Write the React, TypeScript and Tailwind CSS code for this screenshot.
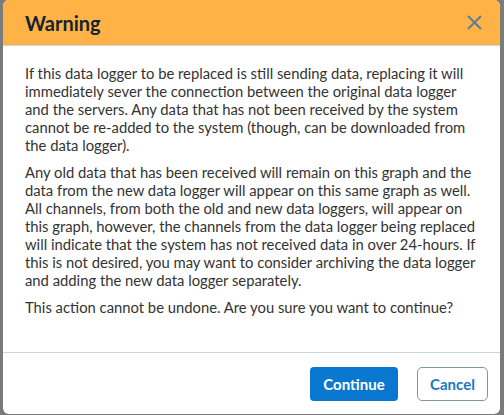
import React from 'react';

const App: React.FC = () => {
    return (
        <div className="w-[504px] h-[415px] bg-[#7b7b7b] overflow-hidden" style={{ fontFamily: 'Lato, "Open Sans", sans-serif' }}>
            <div className="ml-[3px] w-[497px] h-[414px] bg-white rounded-md flex flex-col overflow-hidden">
                {/* header */}
                <div className="h-[46px] bg-[#ffb347] border-b border-[#c9d6dc] flex items-center justify-between pl-[22px] pr-[18px] shrink-0">
                    <h2 className="text-[20px] font-bold text-[#17232e] leading-none">Warning</h2>
                    <button className="text-[#5b7d96]" aria-label="Close">
                        <svg width="15" height="15" viewBox="0 0 15 15" fill="none" stroke="currentColor" strokeWidth="2">
                            <path d="M1 1 L14 14 M14 1 L1 14" />
                        </svg>
                    </button>
                </div>

                {/* body */}
                <div className="flex-1 pl-[22px] pr-[20px] pt-[18px] text-[14.8px] leading-[18px] text-[#333]">
                    <p className="mb-[9px]">
                        If this data logger to be replaced is still sending data, replacing it will immediately sever the connection between the original data logger and the servers. Any data that has not been received by the system cannot be re-added to the system (though, can be downloaded from the data logger).
                    </p>
                    <p className="mb-[9px]">
                        Any old data that has been received will remain on this graph and the data from the new data logger will appear on this same graph as well. All channels, from both the old and new data loggers, will appear on this graph, however, the channels from the data logger being replaced will indicate that the system has not received data in over 24-hours. If this is not desired, you may want to consider archiving the data logger and adding the new data logger separately.
                    </p>
                    <p>This action cannot be undone. Are you sure you want to continue?</p>
                </div>

                {/* footer */}
                <div className="h-[62px] border-t border-[#c9d6dc] flex items-start justify-end gap-[19px] pt-[14px] pr-[12px] shrink-0">
                    <button className="h-[34px] w-[88px] rounded-[4px] bg-[#0a78d1] text-white font-bold text-[15px]">
                        Continue
                    </button>
                    <button className="h-[34px] w-[71px] rounded-[5px] border border-[#7f97a6] text-[#1b78c5] font-bold text-[15px]">
                        Cancel
                    </button>
                </div>
            </div>
        </div>
    );
};

export default App;
